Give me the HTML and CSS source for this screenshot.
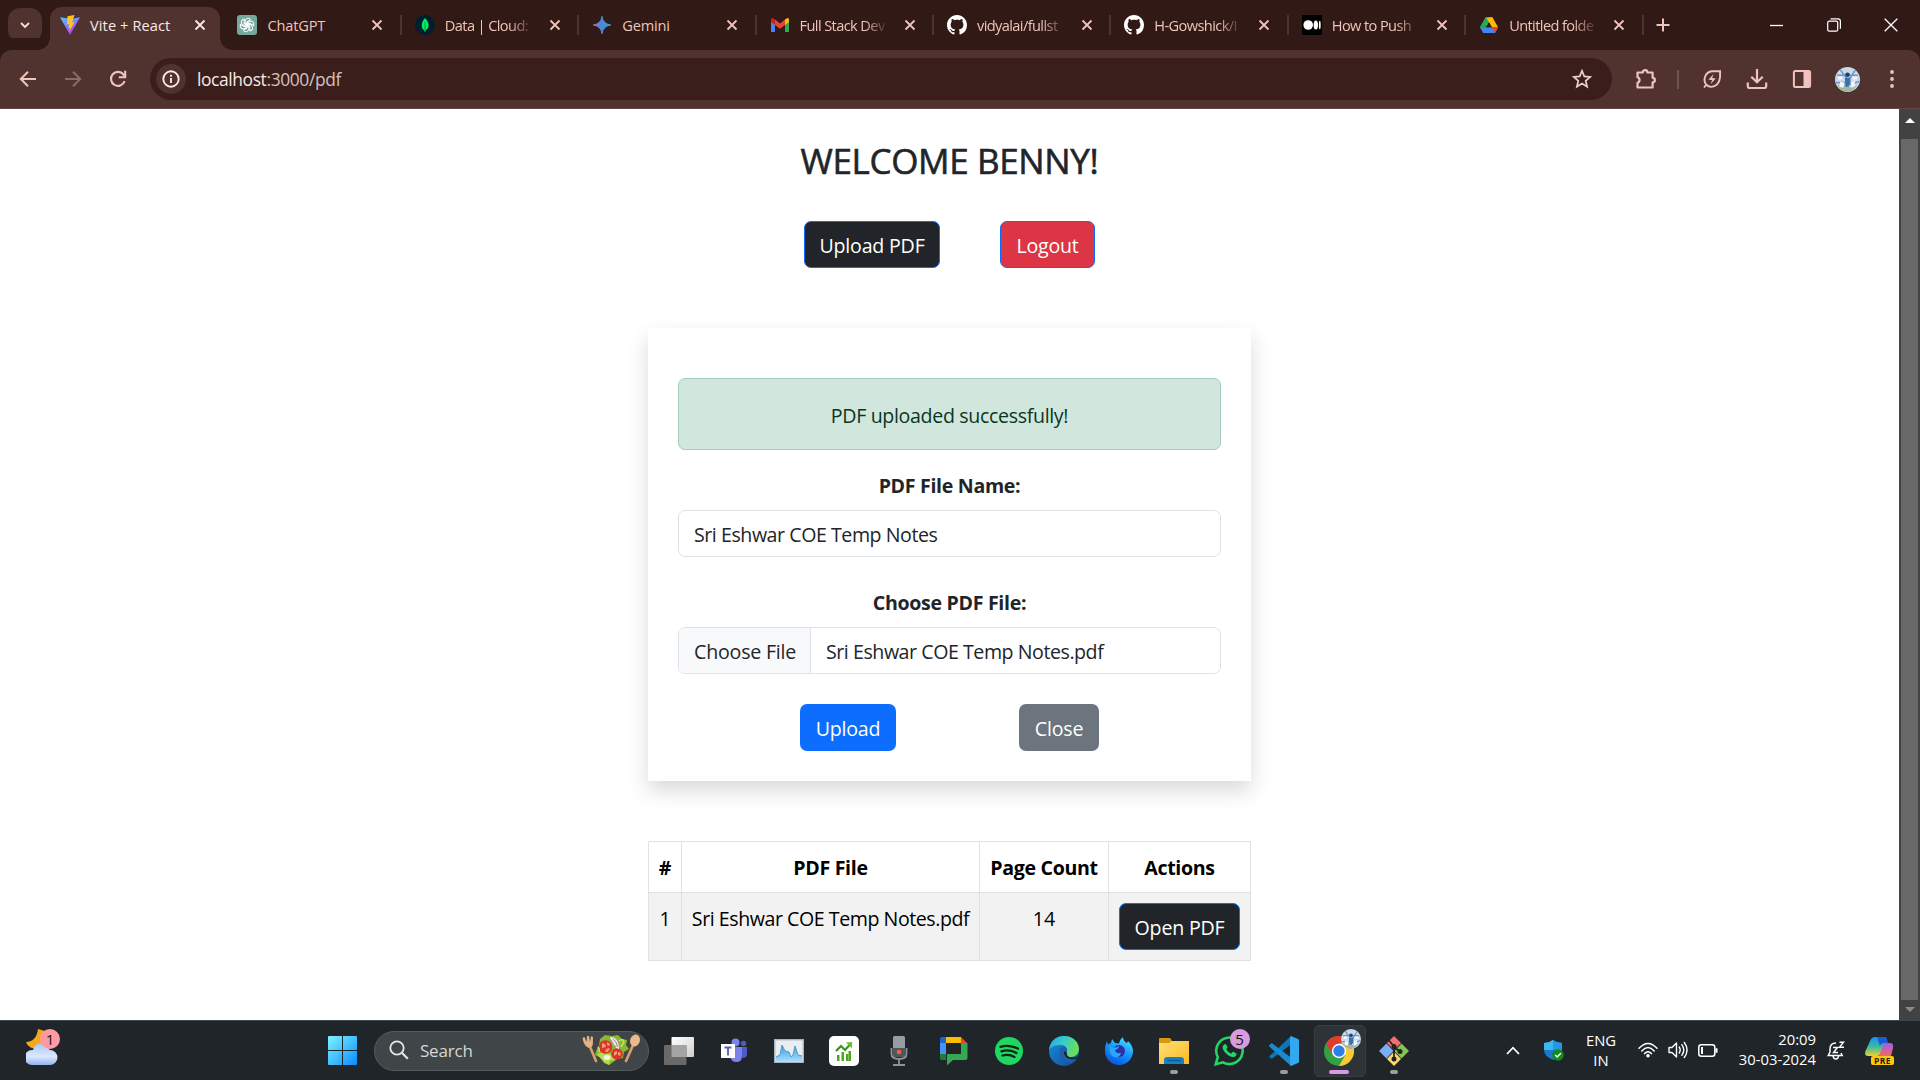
FILE: index.html
```html
<!DOCTYPE html>
<html lang="en">
<head>
<meta charset="utf-8">
<title>Vite + React</title>
<link rel="stylesheet" href="styles.css">
</head>
<body>
<svg class="defs" width="0" height="0">
  <defs>
    <linearGradient id="vite" x1="0" y1="0" x2=".5" y2="1"><stop offset="0" stop-color="#41d1ff"/><stop offset="1" stop-color="#bd34fe"/></linearGradient>
    <linearGradient id="gem" x1="0" y1="0" x2="1" y2="0"><stop offset="0" stop-color="#8e75c2"/><stop offset=".5" stop-color="#4b86d8"/><stop offset="1" stop-color="#1fa8e0"/></linearGradient>
    <linearGradient id="win" x1="0" y1="0" x2="1" y2="1"><stop offset="0" stop-color="#7df4ff"/><stop offset="1" stop-color="#0a8cff"/></linearGradient>
    <linearGradient id="cloud" x1="0" y1="0" x2="0" y2="1"><stop offset="0" stop-color="#a9c8fb"/><stop offset=".6" stop-color="#dbe8fc"/><stop offset="1" stop-color="#8fb3f0"/></linearGradient>
    <linearGradient id="fold" x1="0" y1="0" x2="1" y2="1"><stop offset="0" stop-color="#ffe07a"/><stop offset="1" stop-color="#fbb91f"/></linearGradient>
    <linearGradient id="edgeA" x1="0" y1="0" x2="1" y2=".3"><stop offset="0" stop-color="#2aa5e5"/><stop offset=".5" stop-color="#35c9d0"/><stop offset="1" stop-color="#66e05a"/></linearGradient>
    <linearGradient id="edgeB" x1="0" y1="0" x2="1" y2="1"><stop offset="0" stop-color="#1a8fe0"/><stop offset="1" stop-color="#114a94"/></linearGradient>
    <linearGradient id="ff" x1=".8" y1="0" x2=".3" y2="1"><stop offset="0" stop-color="#4fe3ff"/><stop offset=".5" stop-color="#1596ff"/><stop offset="1" stop-color="#0a53e0"/></linearGradient>
    <linearGradient id="wave" x1="0" y1="0" x2="0" y2="1"><stop offset="0" stop-color="#3b9be0"/><stop offset="1" stop-color="#a5dbfa"/></linearGradient>
    <linearGradient id="copA" x1="0" y1="0" x2="0" y2="1"><stop offset="0" stop-color="#1a8df0"/><stop offset=".5" stop-color="#3bb9a0"/><stop offset="1" stop-color="#e8d32e"/></linearGradient>
    <linearGradient id="copB" x1="0" y1="0" x2="0" y2="1"><stop offset="0" stop-color="#a05bf0"/><stop offset="1" stop-color="#f2695e"/></linearGradient>
    <linearGradient id="tv" x1="0" y1="0" x2="1" y2="1"><stop offset="0" stop-color="#ffffff"/><stop offset="1" stop-color="#cfcfcf"/></linearGradient>
    <symbol id="x" viewBox="0 0 12 12"><path d="M1.5 1.5l9 9M10.5 1.5l-9 9" stroke="currentColor" stroke-width="1.8" fill="none"/></symbol>
    <symbol id="github" viewBox="0 0 16 16"><path fill="#fff" d="M8 0C3.58 0 0 3.58 0 8c0 3.54 2.29 6.53 5.47 7.59.4.07.55-.17.55-.38 0-.19-.01-.82-.01-1.49-2.01.37-2.53-.49-2.69-.94-.09-.23-.48-.94-.82-1.13-.28-.15-.68-.52-.01-.53.63-.01 1.08.58 1.23.82.72 1.21 1.87.87 2.33.66.07-.52.28-.87.51-1.07-1.78-.2-3.64-.89-3.64-3.95 0-.87.31-1.59.82-2.15-.08-.2-.36-1.02.08-2.12 0 0 .67-.21 2.2.82.64-.18 1.32-.27 2-.27s1.36.09 2 .27c1.53-1.04 2.2-.82 2.2-.82.44 1.1.16 1.92.08 2.12.51.56.82 1.27.82 2.15 0 3.07-1.87 3.75-3.65 3.95.29.25.54.73.54 1.48 0 1.07-.01 1.93-.01 2.2 0 .21.15.46.55.38A8.01 8.01 0 0 0 16 8c0-4.42-3.58-8-8-8z"/></symbol>
    <symbol id="avatar" viewBox="0 0 24 24"><circle cx="12" cy="12" r="12" fill="#c9dae8"/><path d="M5 2.500l7 9.500M19.500 3l-6 9M2 8h20M1 15h9M14 17l9-3" stroke="#6b98c6" stroke-width="1.500"/><path d="M2 18q5-4 10 0t10-2q-4 8-10 8T2 18z" fill="#a3b6a2"/><circle cx="12" cy="7.500" r="2.200" fill="#20406f"/><path d="M9.500 10.500l5-.5.5 5-2 4h-3z" fill="#3b6fae"/><path d="M5 14l4 1-1 5-4-1zM15 15l4-2v5l-3 2zM3 9h4v3H3zM17 9h4v3h-4z" fill="#f1f6fb"/></symbol>
  </defs>
</svg>

<header class="tabstrip">
  <button class="tab-search"><svg width="12" height="12" viewBox="0 0 12 12"><path d="M2 4l4 4 4-4" stroke="#f4dcd7" stroke-width="1.9" fill="none"/></svg></button>
  <div class="tabs">
    <div class="tab active">
      <svg class="fav" viewBox="0 0 20 20"><path d="M0 2.2L10 20 20 2.2 11 4z" fill="url(#vite)"/><path d="M14.5 0L7.5 1.3 6.8 9.6l2.4-.4-.8 4.1 1.7-.5-.9 4 5.3-9.7-2.5.4z" fill="#ffc61f"/></svg>
      <span class="tab-title first">Vite + React</span><svg class="close"><use href="#x"/></svg>
    </div>
    <div class="tab">
      <svg class="fav" viewBox="0 0 20 20"><rect width="20" height="20" rx="3" fill="#74a99b"/><g fill="none" stroke="#fff" stroke-width="1"><g id="petal"><path d="M8.2 10.8V6.2a3 3 0 0 1 5.2-2l.3.4L10 6.800v4.400"/></g><use href="#petal" transform="rotate(60 10 10)"/><use href="#petal" transform="rotate(120 10 10)"/><use href="#petal" transform="rotate(180 10 10)"/><use href="#petal" transform="rotate(240 10 10)"/><use href="#petal" transform="rotate(300 10 10)"/></g></svg>
      <span class="tab-title">ChatGPT</span><svg class="close"><use href="#x"/></svg>
    </div>
    <div class="tab sep">
      <svg class="fav" viewBox="0 0 20 20"><circle cx="10" cy="10" r="10" fill="#001e2b"/><path d="M10 3c5 5 4.500 10.500.5 12.500L10 17l-.5-1.500C5.500 13 6 7.500 10 3z" fill="#00ed64"/><path d="M10 7v10" stroke="#0a9a48"/></svg>
      <span class="tab-title fade">Data | Cloud:</span><svg class="close"><use href="#x"/></svg>
    </div>
    <div class="tab sep">
      <svg class="fav" viewBox="0 0 20 20"><path d="M10 1.300Q11 9 18.700 10 11 11 10 18.700 9 11 1.300 10 9 9 10 1.300z" fill="url(#gem)" stroke="url(#gem)"/></svg>
      <span class="tab-title">Gemini</span><svg class="close"><use href="#x"/></svg>
    </div>
    <div class="tab sep">
      <svg class="fav" viewBox="0 0 20 20"><path d="M1 5v12h4V9z" fill="#4285f4"/><path d="M19 5v12h-4V9z" fill="#34a853"/><path d="M15 4.500l2-1.300q2-.6 2 1.800v2l-4 3z" fill="#fbbc04"/><path d="M5 4.500L3 3.200Q1 2.600 1 5v2l4 3z" fill="#c5221f"/><path d="M5 4.500l5 3.900 5-3.900V10l-5 3.800L5 10z" fill="#ea4335"/></svg>
      <span class="tab-title fade">Full Stack Dev</span><svg class="close"><use href="#x"/></svg>
    </div>
    <div class="tab sep">
      <svg class="fav"><use href="#github"/></svg>
      <span class="tab-title fade">vidyalai/fullst</span><svg class="close"><use href="#x"/></svg>
    </div>
    <div class="tab sep">
      <svg class="fav"><use href="#github"/></svg>
      <span class="tab-title fade">H-Gowshick/I</span><svg class="close"><use href="#x"/></svg>
    </div>
    <div class="tab sep">
      <svg class="fav" viewBox="0 0 20 20"><rect width="20" height="20" rx="1" fill="#000"/><circle cx="6.200" cy="10" r="4.800" fill="#fff"/><ellipse cx="13.800" cy="10" rx="2.200" ry="4.600" fill="#fff"/><ellipse cx="17.800" cy="10" rx=".9" ry="4.200" fill="#fff"/></svg>
      <span class="tab-title fade">How to Push</span><svg class="close"><use href="#x"/></svg>
    </div>
    <div class="tab sep">
      <svg class="fav" viewBox="0 0 20 20"><path d="M6.800 2h3.200v5.200L4.300 17 1 12.200z" fill="#1e9e4a"/><path d="M6.800 2h6.400L8.400 10.200 1 12.200z" fill="#2aa850"/><path d="M13.200 2l5.900 10.200h-6.300L7.500 3z" fill="#fbbc04"/><path d="M1 12.200h18.100L16 18H4.200z" fill="#4285f4"/><path d="M12.800 12.200h6.300L16 18z" fill="#ea4335"/><path d="M7.200 12.200L10 7.300l2.800 4.900z" fill="#311915"/></svg>
      <span class="tab-title fade">Untitled folde</span><svg class="close"><use href="#x"/></svg>
    </div>
    <div class="new-tab"><svg width="14" height="14" viewBox="0 0 14 14"><path d="M7 .5v13M.5 7h13" stroke="#f0c4bc" stroke-width="2"/></svg></div>
  </div>
  <div class="window-controls">
    <svg width="14" height="14" viewBox="0 0 14 14"><path d="M0 7.500h13" stroke="#fff" stroke-width="1.300"/></svg>
    <svg width="14" height="14" viewBox="0 0 14 14"><rect x=".7" y="3.200" width="10" height="10" rx="1.500" fill="none" stroke="#fff" stroke-width="1.200"/><path d="M3.500.8H11q2.400 0 2.400 2.400v7.500" stroke="#fff" stroke-width="1.200" fill="none"/></svg>
    <svg width="14" height="14" viewBox="0 0 14 14"><path d="M.7.700l12.600 12.600M13.300.7L.7 13.300" stroke="#fff" stroke-width="1.300"/></svg>
  </div>
</header>

<nav class="toolbar">
  <div class="nav-buttons">
    <svg width="20" height="20" viewBox="0 0 20 20"><path d="M18 10H3M10 2.800L2.800 10l7.200 7.200" stroke="#f0c4bc" stroke-width="2" fill="none"/></svg>
    <svg width="20" height="20" viewBox="0 0 20 20"><path d="M2 10h15M10 2.800l7.200 7.200-7.200 7.200" stroke="#8d6a65" stroke-width="2" fill="none"/></svg>
    <svg width="20" height="20" viewBox="0 0 20 20"><path d="M16.600 12.200A7 7 0 1 1 15.500 5.500L17 7.200" stroke="#f0c4bc" stroke-width="2.100" fill="none"/><path d="M17.200 1.800v6.400h-6.400" stroke="#f0c4bc" stroke-width="2.100" fill="none"/></svg>
  </div>
  <div class="omnibox">
    <span class="site-info"><svg width="18" height="18" viewBox="0 0 18 18"><circle cx="9" cy="9" r="7.700" stroke="#fbe9e6" stroke-width="1.900" fill="none"/><path d="M9 8v5M9 4.800v1.900" stroke="#fbe9e6" stroke-width="1.900"/></svg></span>
    <span class="url">localhost<span class="path">:3000/pdf</span></span>
    <svg width="20" height="20" viewBox="0 0 20 20"><path d="M10 1.800l2.300 5.600 6 .5-4.600 3.900 1.400 5.900L10 14.600l-5.100 3.100 1.400-5.900L1.700 7.900l6-.5z" fill="none" stroke="#ead2cd" stroke-width="1.700"/></svg>
  </div>
  <div class="actions">
    <svg width="22" height="22" viewBox="0 0 22 22"><path d="M2.500 4.500h5.300a2.300 2.300 0 0 1 4.600 0h5.200v5.300a2.300 2.300 0 0 1 0 4.600v5.100H2.500v-4.800a2.800 2.800 0 0 0 0-5.400z" fill="none" stroke="#f0c4bc" stroke-width="2.200" stroke-linejoin="round"/></svg>
    <i class="divider"></i>
    <svg width="20" height="20" viewBox="0 0 20 20"><path d="M2 18.500l2.300-2.700C.6 11 3 3 10 2.300c3-.3 5 .2 8-.2.200 3 .5 6-.7 9.500-1.800 6-8.800 8.200-13 4.200" fill="none" stroke="#f0c4bc" stroke-width="1.900"/><path d="M11.500 5l-5 5.700 3.600.4-1.400 4 5-5.700-3.500-.4z" fill="#f0c4bc"/></svg>
    <svg width="22" height="22" viewBox="0 0 22 22"><path d="M11 1v13M5.300 8.800L11 14.300l5.700-5.500M1.800 14.500V18q0 2 2 2h14.400q2 0 2-2v-3.500" fill="none" stroke="#f0c4bc" stroke-width="2.200"/></svg>
    <svg width="20" height="20" viewBox="0 0 20 20"><rect x="1.900" y="1.900" width="16.200" height="16.200" rx="1.500" fill="none" stroke="#f0c4bc" stroke-width="2"/><path d="M11.500 2h6v16h-6z" fill="#f0c4bc"/></svg>
    <svg width="25" height="25"><use href="#avatar"/></svg>
    <svg width="6" height="20" viewBox="0 0 6 20"><g fill="#f0c4bc"><circle cx="3" cy="3" r="1.900"/><circle cx="3" cy="10" r="1.900"/><circle cx="3" cy="17" r="1.900"/></g></svg>
  </div>
</nav>

<div class="viewport">
  <main class="page">
    <h2>WELCOME BENNY!</h2>
    <div class="user-actions">
      <button class="btn dark upload-pdf">Upload PDF</button>
      <button class="btn danger">Logout</button>
    </div>
    <form class="card">
      <div class="alert">PDF uploaded successfully!</div>
      <label>PDF File Name:</label>
      <div class="field"><span class="field-text">Sri Eshwar COE Temp Notes</span></div>
      <label>Choose PDF File:</label>
      <div class="field"><span class="choose">Choose File</span><span class="field-text">Sri Eshwar COE Temp Notes.pdf</span></div>
      <div class="form-actions">
        <button type="button" class="btn primary">Upload</button>
        <button type="button" class="btn secondary">Close</button>
      </div>
    </form>
    <table>
      <colgroup><col class="c-num"><col class="c-file"><col class="c-count"><col class="c-act"></colgroup>
      <thead><tr><th>#</th><th>PDF File</th><th>Page Count</th><th>Actions</th></tr></thead>
      <tbody><tr><td>1</td><td class="file-cell">Sri Eshwar COE Temp Notes.pdf</td><td>14</td><td><button class="btn dark open">Open PDF</button></td></tr></tbody>
    </table>
  </main>
  <div class="scrollbar">
    <span class="arrow up"></span>
    <span class="thumb"></span>
    <span class="arrow down"></span>
  </div>
</div>

<footer class="taskbar">
  <div class="weather">
    <svg width="34" height="46" viewBox="0 0 34 46"><path d="M12 8c-1 8-5 13-12 13 3 8 14 9 19 2V10z" fill="#f3a91f"/><path d="M6 44a7.500 7.500 0 0 1 0-15h1a8.500 8.500 0 0 1 16.500 0H24a7.500 7.500 0 0 1 0 15z" fill="url(#cloud)"/></svg>
    <span class="badge pink">1</span>
  </div>
  <div class="apps">
    <svg class="start" width="29" height="29" viewBox="0 0 29 29"><path d="M1 0h13v14H0V1q0-1 1-1zM15 0h13q1 0 1 1v13H15zM0 15h14v14H1q-1 0-1-1zM15 15h14v13q0 1-1 1H15z" fill="url(#win)"/></svg>
    <div class="search">
      <svg width="20" height="20" viewBox="0 0 20 20"><circle cx="8" cy="8" r="6.700" stroke="#e6e6e6" stroke-width="1.800" fill="none"/><path d="M12.800 12.800l6 6" stroke="#e6e6e6" stroke-width="2.100"/></svg>
      <span>Search</span>
      <svg class="salad" width="58" height="32" viewBox="0 0 58 32"><path d="M6 8l8 19" stroke="#d9a06a" stroke-width="2.600" stroke-linecap="round"/><path d="M.5 4l2-1 2 5 .5-6 2 .0 1 6 1-6 2 1-.2 8q-2 4-5 2.500Q2 12 .5 4z" fill="#e4b283"/><path d="M52 9l-8 18" stroke="#d9a06a" stroke-width="2.600" stroke-linecap="round"/><ellipse cx="53" cy="6.500" rx="4.800" ry="6" transform="rotate(20 53 6.500)" fill="#e8b98b"/><path d="M14 17l3-6 1-6 5-4 7 1 6-1 4 4 5 1-1 5 3 4-5 3-1 6-6 1-5 4-3 2-5-2-3-5-6-3z" fill="#86b832"/><path d="M15 20l6-2 8 2 6 1-2 5-5 1-1 4-5-3-3-3z" fill="#b8db4b"/><circle cx="23.500" cy="13" r="6.800" fill="#d9352a"/><path d="M20 9l3 1 1 3-4 1zM24 15l4-1-2 4-3 0zM25 8l3 2-1 2-2-1z" fill="#f49a78"/><circle cx="35" cy="20" r="5.800" fill="#d9352a"/><path d="M32 18l3-1 0 3-3 2zM36 18l3 1-1 3-2-1z" fill="#f49a78"/><path d="M28 3q9 0 9 12-7-2-9-12z" fill="#f2e3ef"/><path d="M31 5q4 3 4.500 8M29 6q2 5 5 7" stroke="#a86b9b" stroke-width=".9" fill="none"/><ellipse cx="25" cy="23.500" rx="3.500" ry="2.500" fill="#f3f6dc"/><path d="M37 7q4-3 5 1l-3 5M16 13q2 3 1 5" stroke="#c9e25f" stroke-width="1.500" fill="none"/></svg>
    </div>
    <div class="app"><svg width="30" height="30" viewBox="0 0 30 30"><rect x="7.500" y="1" width="22.500" height="20" rx="1" fill="url(#tv)"/><rect x="0" y="9" width="22.500" height="20" rx="1" fill="#696969"/><path d="M7.500 9h15v12h-15z" fill="#a4a4a4"/></svg></div>
    <div class="app"><svg width="30" height="30" viewBox="0 0 30 30"><circle cx="16.500" cy="6.500" r="4" fill="#7b83eb"/><circle cx="24.500" cy="7.500" r="2.700" fill="#5059c9"/><path d="M18 11h10v7q0 4-4.500 4z" fill="#5059c9"/><path d="M12 11h11v9q0 6-5.500 6T11 20z" fill="#7b83eb"/><rect x="2" y="8" width="14" height="14" fill="#fff"/><path d="M5.500 11.500h7M9 11.500v8" stroke="#5a5fbd" stroke-width="1.900"/></svg></div>
    <div class="app"><svg width="30" height="24" viewBox="0 0 30 24"><rect x=".7" y=".7" width="28.600" height="22.600" fill="#e9eef3" stroke="#aab3bb" stroke-width="1.400"/><path d="M2 22v-4l4-2 2-10 3 6 4 1 2 5 2-2 2-9 3 9 4 1v5z" fill="url(#wave)"/><path d="M2 18l4-2L8 6l3 6 4 1 2 5 2-2 2-9 3 9 4 1" fill="none" stroke="#4a9bd6"/></svg></div>
    <div class="app"><svg width="30" height="30" viewBox="0 0 30 30"><rect width="30" height="30" rx="5" fill="#fff"/><path d="M8 19h2.500v6H8zM12.500 16H15v9h-2.500zM17 18h2.200v7H17zM19.500 15H22v10h-2.500z" fill="#4aa81e"/><path d="M7 15l5-5 4 4 5.500-6" stroke="#37941c" stroke-width="2.200" fill="none"/><path d="M17 6.500l6-.5v6.500z" fill="#6dbf1e"/></svg></div>
    <div class="app"><svg width="30" height="30" viewBox="0 0 30 30"><path d="M7.500 12v6q0 5 7.500 5t7.500-5v-6" stroke="#8d939b" stroke-width="1.800" fill="none"/><rect x="9" y="0" width="12" height="21" rx="1.500" fill="#969da6"/><path d="M9 12h12v7q0 2-2 2h-8q-2 0-2-2z" fill="#50565e"/><circle cx="15" cy="16" r="2.300" fill="#f2622e"/><path d="M15 23v5M9 29h12" stroke="#8d939b" stroke-width="1.800"/></svg></div>
    <div class="app"><svg width="30" height="30" viewBox="0 0 30 30"><path d="M7 1h15v6H7z" fill="#fbbc04"/><path d="M1 3q0-2 2-2h4v6H1z" fill="#1967d2"/><path d="M1 7h6v11H1z" fill="#4a90f7"/><path d="M1 18h6v6H3q-2 0-2-2z" fill="#188038"/><path d="M22 1l6 6h-6z" fill="#ea4335"/><path d="M22 7h6.500v15q0 2-2 2H14l-6 5.500V18h14z" fill="#34a853"/></svg></div>
    <div class="app"><svg width="28" height="28" viewBox="0 0 28 28"><circle cx="14" cy="14" r="14" fill="#1ed760"/><path d="M5.500 9.800q9-2.700 17.500 1.800M6.500 14.300q8-2.300 15 1.700M7.500 18.500q6.500-1.800 12 1.400" stroke="#15231a" stroke-width="2.300" stroke-linecap="round" fill="none"/></svg></div>
    <div class="app"><svg width="30" height="30" viewBox="0 0 30 30"><circle cx="15" cy="15" r="15" fill="url(#edgeB)"/><path d="M0 14C1 5 7 0 15 0c9 0 15 6 15 13 0 5-4 8-8 8-4 0-6-1-5-3 3-5-1-9-6-9-6 0-10 3-11 5z" fill="url(#edgeA)"/><path d="M11 9c4 0 8 2 7 7l-1 2c-1 4 6 7 11 4-1 1-1 2-2 3-6 3-13 0-15-5-2-4 0-9 4-9-1-1-2-2-4-2z" fill="#1b60b0"/><path d="M18 17c-1 4 5 6 11 3.500l-1.300 2.300C21 25 14 21 15 15z" fill="#202529"/></svg></div>
    <div class="app"><svg width="28" height="28" viewBox="0 0 28 28"><path d="M2 4l1 4q1-2 3-2l1-4 3 4 4 .5Q15 2 18 0q0 4 4 6l1-2q5 5 5 10a14 14 0 0 1-28 0Q0 8 2 4z" fill="url(#ff)"/><circle cx="14" cy="14" r="6" fill="#2b2fa8"/><path d="M5 9q5 3 9 0 0 3-4 4 1 4 6 3-1 5-7 4Q3 17 5 9z" fill="#28a7ff"/></svg></div>
    <div class="app run"><svg width="30" height="28" viewBox="0 0 30 28"><path d="M0 2q0-1 1-1h9q1 0 2 1l1 2v4H0z" fill="#d9980f"/><path d="M0 6h10l3-2h17v23H0z" fill="url(#fold)"/><path d="M5 27v-4q0-3 3-3h14q3 0 3 3v4z" fill="#1681c9"/><path d="M9 23.500h12" stroke="#0b5c98" stroke-width="1.500" stroke-linecap="round"/></svg></div>
    <div class="app"><svg width="30" height="30" viewBox="0 0 30 30"><path d="M1.800 28.200l2-7.200A13.200 13.200 0 1 1 9 26.300z" fill="none" stroke="#25d366" stroke-width="2.600"/><path d="M10.300 8.200c-3 2.500-1.500 5.500.8 8.200 2.500 3 6.200 5.200 9 4.600 1.800-.5 2.800-2.200 2.300-3.500l-3.200-1.700c-1 0-1.300 1.800-2.200 1.700-2-.7-3.800-2.400-4.500-4.200.2-1 1.200-1.200 1-2.200L12 8.200z" fill="#25d366"/></svg><span class="badge lilac">5</span></div>
    <div class="app run"><svg width="30" height="30" viewBox="0 0 30 30"><path d="M22 0L4.500 16.500 1 19.500l-1 1 2 2 1 .2L24 7z" fill="#0f75b8"/><path d="M0 9.500l2-2 1-.2L24 23l-2 7L.3 10.500z" fill="#1a8ad0"/><path d="M22 0l7 3q1 .5 1 1.500v21q0 1-1 1.500l-7 3-1-1.500V1.500z" fill="#31a8f0"/></svg></div>
    <div class="app run current"><svg width="30" height="30" viewBox="0 0 30 30"><circle cx="15" cy="15" r="15" fill="#34a044"/><path d="M2 7.500A15 15 0 0 1 28 7.500H15L8.500 18.700z" fill="#e33b2e"/><path d="M28 7.500A15 15 0 0 1 15 30l6.500-11.200L15 7.500z" fill="#fcc934"/><circle cx="15" cy="15" r="7.200" fill="#fff"/><circle cx="15" cy="15" r="5.700" fill="#2f7de9"/></svg><svg class="profile" width="20" height="20"><use href="#avatar"/></svg></div>
    <div class="app run"><svg width="30" height="30" viewBox="0 0 30 30"><path d="M15 0l7 7-7 7-7-7z" fill="#f36f6c"/><path d="M7.500 7.500l7 7.500-7 7.500L0 15z" fill="#7aaef5"/><path d="M22.500 7.500L30 15l-7.500 7.500-7-7.500z" fill="#84c452"/><path d="M15 15.500l7 7.500-7 7-7-7z" fill="#fbd968"/><path d="M10 4.500l5 6V24M15 10.500l6 5.500M15 17h-1" stroke="#222" stroke-width="1.700" fill="none"/><g fill="#222"><circle cx="15" cy="10.500" r="2.500"/><circle cx="21" cy="15.500" r="2.500"/><circle cx="15" cy="23" r="2.500"/></g></svg></div>
  </div>
  <div class="tray">
    <svg class="chev" width="14" height="9" viewBox="0 0 14 9"><path d="M1 8l6-6.300L13 8" stroke="#fff" stroke-width="1.800" fill="none"/></svg>
    <svg class="shield" width="20" height="21" viewBox="0 0 20 21"><path d="M9 0q4 3 9 3v7q0 6-9 10Q0 16 0 10V3q5 0 9-3z" fill="#1479cf"/><path d="M9 0v10H0V3q5 0 9-3z" fill="#3fb6f0"/><path d="M9 0v10h9V3q-5 0-9-3z" fill="#2596e3"/><circle cx="14" cy="15" r="5.800" fill="#138a1c"/><path d="M11.200 15l2 2 3.600-3.800" stroke="#fff" stroke-width="1.500" fill="none"/></svg>
    <div class="lang">ENG<br>IN</div>
    <svg class="wifi" width="20" height="16" viewBox="0 0 20 16"><g fill="none" stroke="#fff" stroke-width="1.500" stroke-linecap="round"><path d="M1 6.300q9-9.800 18 0M3.800 9q6.200-6.800 12.400 0M6.600 11.600q3.400-3.600 6.800 0"/></g><circle cx="10" cy="13.700" r="1.800" fill="#fff"/></svg>
    <svg class="sound" width="20" height="18" viewBox="0 0 20 18"><g fill="none" stroke="#fff" stroke-width="1.400" stroke-linecap="round" stroke-linejoin="round"><path d="M1 6.500h3L8.500 2v14L4 11.500H1zM11.200 6q2 3 0 6M13.800 3.700q4 5.300 0 10.600M16.300 1.500q5.500 7.500 0 15"/></g></svg>
    <svg class="battery" width="20" height="13" viewBox="0 0 20 13"><rect x=".8" y=".8" width="16" height="11.400" rx="2.500" fill="none" stroke="#fff" stroke-width="1.500"/><path d="M3 3h2v7H3zM17.500 4.200h2v4.600h-2z" fill="#fff"/></svg>
    <div class="clock">20:09<br>30-03-2024</div>
    <svg class="bell" width="18" height="19" viewBox="0 0 18 19"><g fill="none" stroke="#fff" stroke-width="1.500"><path d="M9 2Q3 2 3 8v3l-1.800 3.500h14L14 12M6 15q.5 3 2.800 3t2.800-3"/><path d="M6 6.500h4.500L6.500 11.500H11M12.500 1.200h4l-4 5h4.500" stroke-width="1.400"/></g></svg>
    <div class="copilot"><svg width="30" height="29" viewBox="0 0 30 29"><path d="M10 1h10q2 0 1 3l-5 13q-1 3-4 3H3q-4 0-2.500-5L5 5q1.500-4 5-4z" fill="url(#copA)"/><path d="M12 1h8q2 0 3 6h-4q-3 0-4 3z" fill="#1b5bd6"/><path d="M19 7h6q4 0 3 5l-2 8H14z" fill="url(#copB)"/></svg><span class="pre">PRE</span></div>
  </div>
</footer>
</body>
</html>
```
FILE: styles.css
```css
* { box-sizing: border-box; }
body {
  margin: 0;
  width: 1920px;
  height: 1080px;
  overflow: hidden;
  display: flex;
  flex-direction: column;
  font-family: "Open Sans", "Noto Sans", sans-serif;
  background: #fff;
}
.defs { position: absolute; }
svg { display: block; flex: none; }
button { font: inherit; padding: 0; border: 0; }

/* Tab strip */
.tabstrip { height: 50px; flex: none; display: flex; background: #311915; }
.tab-search {
  width: 34px; height: 34px; margin: 8px 0 0 8px; border-radius: 12px; flex: none;
  display: flex; align-items: center; justify-content: center; background: #50332f;
}
.tabs { display: flex; margin-left: 8px; }
.tab {
  width: 177.4px; height: 50px; padding-left: 10px; flex: none;
  display: flex; align-items: center; position: relative; color: #f0c4bc;
}
.tab.active { color: #fbe9e6; z-index: 1; }
.tab.active::before {
  content: ""; position: absolute; z-index: -1; left: 0; top: 7px; width: 170px; height: 43px;
  border-radius: 12px 12px 0 0; background: #50332f;
}
.tab.active::after {
  content: ""; position: absolute; z-index: -1; left: -12px; top: 38px; width: 194px; height: 12px;
  background:
    radial-gradient(circle at 0 0, transparent 11.5px, #50332f 12px) left / 12px 12px no-repeat,
    radial-gradient(circle at 100% 0, transparent 11.5px, #50332f 12px) right / 12px 12px no-repeat;
}
.tab.sep::before {
  content: ""; position: absolute; left: -5px; top: 15px; width: 2px; height: 20px; background: #50332f;
}
.fav { width: 20px; height: 20px; }
.tab-title {
  width: 90px; margin-left: 10px; font-size: 14.6px; line-height: 20px; white-space: nowrap; letter-spacing: -.15px;
}
.first { letter-spacing: .1px; }
.fade {
  letter-spacing: -.6px;
  -webkit-mask-image: linear-gradient(90deg, #000 64px, transparent 89px);
  mask-image: linear-gradient(90deg, #000 64px, transparent 89px);
}
.close { width: 12px; height: 12px; margin-left: 14px; }
.new-tab { display: flex; align-items: center; padding-left: 9px; position: relative; }
.new-tab::before { content: ""; position: absolute; left: -5px; top: 15px; width: 2px; height: 20px; background: #50332f; }
.window-controls { display: flex; gap: 43px; margin-left: auto; padding: 18px 22px 0 0; }

/* Toolbar */
.toolbar {
  height: 59px; flex: none; display: flex; align-items: center; padding-right: 24px;
  background: #50332f; border-bottom: 1px solid #624743; box-shadow: 0 -12px 0 #311915; border-radius: 12px 12px 0 0;
}
.nav-buttons { display: flex; gap: 25px; margin-left: 18px; }
.omnibox {
  width: 1462px; height: 42px; margin-left: 22px; padding: 0 20px 0 6px; border-radius: 21px;
  display: flex; align-items: center; background: #3a1e1b;
}
.site-info { width: 30px; height: 30px; border-radius: 50%; background: #50332f; display: flex; align-items: center; justify-content: center; }
.url { margin: 0 auto 0 11px; font-size: 17.4px; letter-spacing: -.38px; color: #fbe9e6; }
.path { color: #d8c0bb; }
.actions { display: flex; align-items: center; margin-left: 23px; }
.divider { width: 2px; height: 19px; background: #74524d; margin: 0 23px 0 20px; }
.actions svg + svg { margin-left: 24px; }
.actions svg:nth-of-type(5) { margin-left: 23px; }
.actions svg:last-child { margin-left: 29px; }

/* Document */
.viewport { height: 911px; flex: none; display: flex; }
.page {
  flex: 1; display: flex; flex-direction: column; align-items: center; padding-top: 31px;
  font-size: 19.6px; line-height: 30px; color: #212529;
}
h2 {
  margin: 0 0 39px; font-size: 35px; line-height: 42px; font-weight: 500; letter-spacing: -.35px; white-space: nowrap;
  -webkit-text-stroke: .6px #212529;
}
.user-actions { display: flex; gap: 60px; }
.btn { height: 47px; border-radius: 7px; color: #fff; padding-top: 2px; white-space: nowrap; letter-spacing: -.2px; }
.dark { background: #212529; border: 1px solid #0d6efd; }
.danger { background: #dc3545; border: 1px solid #0d6efd; width: 95px; }
.primary { background: #0d6efd; width: 96px; }
.secondary { background: #6c757d; width: 80px; }
.upload-pdf { width: 136px; }
.open { width: 121px; }
.card {
  width: 603px; height: 453px; margin: 60px 0; padding: 50px 30px 30px;
  display: flex; flex-direction: column; background: #fff; box-shadow: 0 10px 20px rgba(0, 0, 0, .15);
}
.alert {
  height: 72px; margin-bottom: 20px; border: 1px solid #a3cfbb; border-radius: 7px; background: #d1e7dd; color: #0a3622;
  display: flex; align-items: center; justify-content: center; padding-top: 3px; letter-spacing: -.34px;
}
label { height: 30px; margin-bottom: 10px; text-align: center; font-weight: 700; padding-top: 1px; letter-spacing: -.32px; }
.field { height: 47px; margin-bottom: 30px; border: 1px solid #dee2e6; border-radius: 7px; display: flex; overflow: hidden; line-height: 48px; }
.field-text { padding-left: 15px; white-space: nowrap; letter-spacing: -.45px; }
.choose { width: 132px; padding-left: 15px; border-right: 1px solid #dee2e6; background: #f8f9fa; white-space: nowrap; letter-spacing: -.2px; }
.form-actions { display: flex; justify-content: center; gap: 123px; }
table { width: 603px; table-layout: fixed; border-collapse: collapse; color: #000; text-align: center; }
.c-num { width: 33px; }
.c-file { width: 298px; }
.c-count { width: 129px; }
.c-act { width: 142px; }
th, td { border: 1px solid #dee2e6; padding: 11px 0 9px; vertical-align: top; white-space: nowrap; }
th { height: 51px; letter-spacing: -.32px; }
td { background: #f2f2f2; height: 68px; }
.file-cell { letter-spacing: -.45px; }
td:last-child { padding: 10px 0; }
td .btn { display: block; margin: 0 auto; }
.scrollbar { width: 21px; background: #424242; display: flex; flex-direction: column; align-items: center; }
.thumb { width: 17px; height: 861px; background: #686868; }
.arrow { border: 5px solid transparent; width: 0; height: 0; }
.up { border-bottom-color: #fff; border-top: 0; margin: 9px 0 16px; }
.down { border-top-color: #8a8a8a; border-bottom: 0; margin-top: 7px; }

/* Taskbar */
.taskbar { height: 60px; flex: none; display: flex; background: #1f2529; border-top: 1px solid #40474a; color: #fff; }
.weather { width: 328px; padding: 0 0 0 26px; position: relative; }
.badge {
  position: absolute; width: 20px; height: 20px; border-radius: 50%; color: #161616;
  font-size: 15px; line-height: 20px; text-align: center;
}
.pink { background: #ff99a4; left: 40px; top: 8px; }
.lilac { background: #d99be0; left: 28px; top: 8px; }
.apps { display: flex; align-items: center; }
.start { margin-right: 17px; }
.search {
  width: 275px; height: 40px; margin-right: 2.5px; padding: 0 8px 2px 14px; border: 1px solid #565b5e; border-radius: 20px;
  display: flex; align-items: center; background: #404547; font-size: 17px; color: #d6d6d6;
}
.search span { margin: 1px auto 0 11px; letter-spacing: -.2px; }
.app { width: 55px; height: 59px; display: flex; align-items: center; justify-content: center; position: relative; }
.run::after {
  content: ""; position: absolute; left: 23.5px; bottom: 6px; width: 8px; height: 4px; border-radius: 2px; background: #9a9d9f;
}
.current::before {
  content: ""; position: absolute; left: 2.5px; top: 4px; width: 50px; height: 50px; border-radius: 5px; background: #2e3337; border: 1px solid #383d41;
}
.current svg { position: relative; }
.current::after { width: 20px; left: 17.5px; background: #d99be0; }
.current .profile { position: absolute; left: 29px; top: 8px; }
.tray { display: flex; align-items: center; margin-left: auto; padding: 0 25px 1px 0; font-size: 14.8px; line-height: 20px; }
.shield { margin-left: 24px; }
.lang { width: 40px; margin-left: 17px; padding-bottom: 1px; text-align: center; }
.wifi { margin-left: 17px; }
.sound { margin-left: 10px; }
.battery { margin-left: 10px; }
.clock { width: 90px; margin-left: 8px; padding-bottom: 3px; text-align: right; white-space: nowrap; }
.bell { margin-left: 11px; }
.copilot { margin-left: 20px; position: relative; }
.pre {
  position: absolute; left: 6px; top: 20px; width: 23px; height: 9px; border-radius: 2px; background: #ffc60a; color: #222;
  font-size: 8.5px; line-height: 9px; font-weight: 700; text-align: center; letter-spacing: .4px;
}
```
